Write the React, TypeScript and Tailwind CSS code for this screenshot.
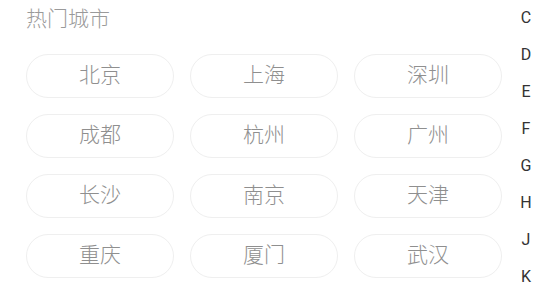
import React from "react";

const cities = ["北京", "上海", "深圳", "成都", "杭州", "广州", "长沙", "南京", "天津", "重庆", "厦门", "武汉"];
const letters = ["C", "D", "E", "F", "G", "H", "J", "K"];

export default function App() {
  return (
    <div className="w-[544px] h-[284px] overflow-hidden bg-white flex" style={{ fontFamily: "Roboto, 'Noto Sans CJK SC', sans-serif" }}>
      <div className="pl-[26px] w-[502px] shrink-0">
        <div className="h-[38px] leading-[38px] text-[21px] font-light text-[#9a9a9a]">热门城市</div>
        <div className="mt-[16px] grid grid-cols-[148px_148px_148px] gap-x-[16px] gap-y-[16px]">
          {cities.map((c) => (
            <div
              key={c}
              className="h-[44px] rounded-full border border-[#efefef] flex items-center justify-center text-[21px] font-light text-[#8f8f8f]"
            >
              {c}
            </div>
          ))}
        </div>
      </div>
      <div className="ml-[14px] w-[20px] -mt-[1px] flex flex-col">
        {letters.map((l) => (
          <div key={l} className="h-[37px] leading-[37px] text-center text-[16px] text-[#333333]">
            {l}
          </div>
        ))}
      </div>
    </div>
  );
}
